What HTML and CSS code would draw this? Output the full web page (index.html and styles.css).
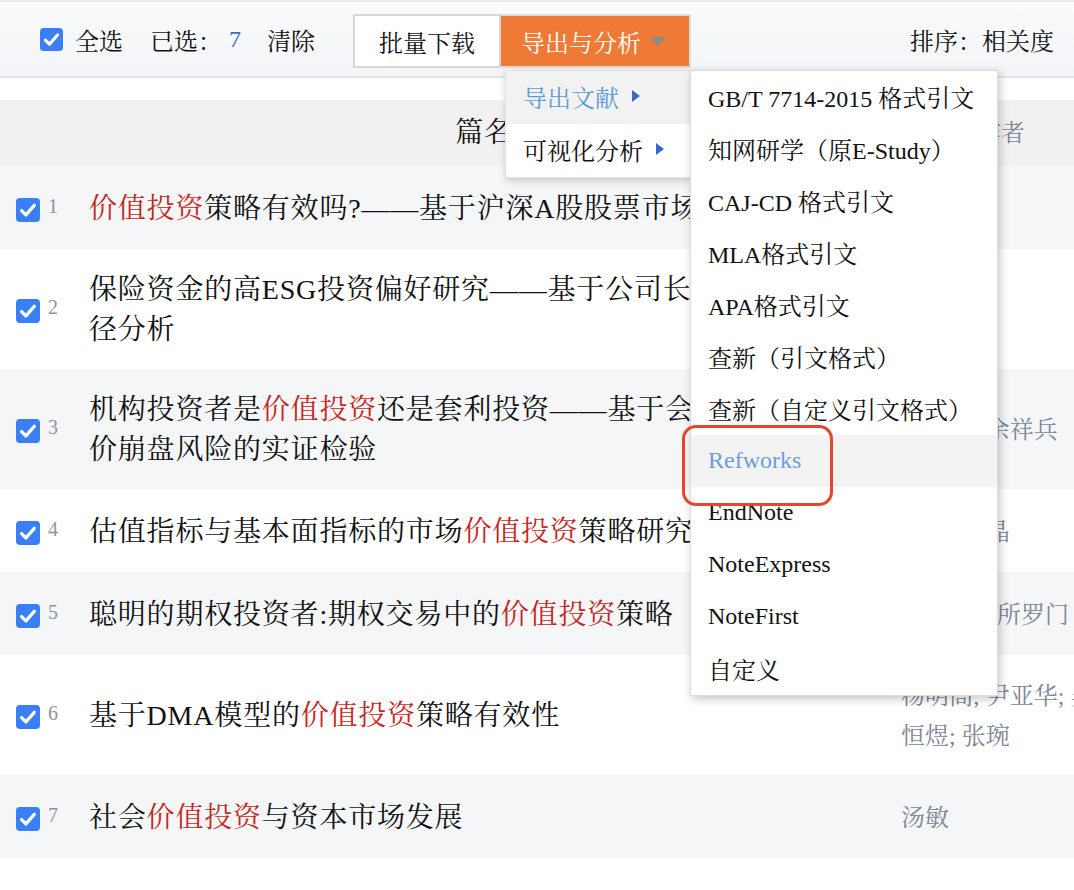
FILE: index.html
```html
<!DOCTYPE html>
<html lang="zh-CN">
<head>
<meta charset="utf-8">
<title>导出与分析</title>
<link rel="stylesheet" href="styles.css">
</head>
<body>
<div class="toolbar">
  <label class="select-all">
    <svg class="cb cb-top" viewBox="0 0 24 24"><rect width="24" height="24" rx="4" fill="#3a7ff6"/><path d="M5.6 12.6l4.3 4.3 8.4-9.6" fill="none" stroke="#fff" stroke-width="3.3" stroke-linecap="round" stroke-linejoin="round"/></svg>
    <span>全选</span>
  </label>
  <span class="selected">已选：</span><span class="count">7</span>
  <span class="clear">清除</span>
  <button class="btn btn-plain">批量下载</button>
  <div class="export">
    <button class="btn btn-orange">导出与分析<svg class="caret" viewBox="0 0 16 9"><path d="M0 0h16L8 9z" fill="#8a8a8a"/></svg></button>
    <div class="menu">
      <div class="menu-item active">导出文献<svg class="arrow" viewBox="0 0 8 12"><path d="M0 0L8 6 0 12z" fill="#3568cc"/></svg></div>
      <div class="menu-item">可视化分析<svg class="arrow" viewBox="0 0 8 12"><path d="M0 0L8 6 0 12z" fill="#3568cc"/></svg></div>
      <div class="submenu">
        <div class="sub-item">GB/T 7714-2015 格式引文</div>
        <div class="sub-item">知网研学（原E-Study）</div>
        <div class="sub-item">CAJ-CD 格式引文</div>
        <div class="sub-item">MLA格式引文</div>
        <div class="sub-item">APA格式引文</div>
        <div class="sub-item">查新（引文格式）</div>
        <div class="sub-item">查新（自定义引文格式）</div>
        <div class="sub-item hover">Refworks</div>
        <div class="sub-item">EndNote</div>
        <div class="sub-item">NoteExpress</div>
        <div class="sub-item">NoteFirst</div>
        <div class="sub-item">自定义</div>
        <div class="mark"></div>
      </div>
    </div>
  </div>
  <div class="sort">排序：相关度</div>
</div>

<div class="table">
  <div class="row head">
    <div class="c-check"></div>
    <div class="c-title">篇名</div>
    <div class="c-author">作者</div>
  </div>
  <div class="row alt">
    <div class="c-check"><svg class="cb" viewBox="0 0 24 24"><rect width="24" height="24" rx="4" fill="#3a7ff6"/><path d="M5.6 12.6l4.3 4.3 8.4-9.6" fill="none" stroke="#fff" stroke-width="3.3" stroke-linecap="round" stroke-linejoin="round"/></svg><span class="num">1</span></div>
    <div class="c-title"><em>价值投资</em>策略有效吗?——基于沪深A股股票市场的检验</div>
    <div class="c-author">李心丹</div>
  </div>
  <div class="row">
    <div class="c-check"><svg class="cb" viewBox="0 0 24 24"><rect width="24" height="24" rx="4" fill="#3a7ff6"/><path d="M5.6 12.6l4.3 4.3 8.4-9.6" fill="none" stroke="#fff" stroke-width="3.3" stroke-linecap="round" stroke-linejoin="round"/></svg><span class="num">2</span></div>
    <div class="c-title">保险资金的高ESG投资偏好研究——基于公司长期投资的路径分析</div>
    <div class="c-author">王静</div>
  </div>
  <div class="row alt">
    <div class="c-check"><svg class="cb" viewBox="0 0 24 24"><rect width="24" height="24" rx="4" fill="#3a7ff6"/><path d="M5.6 12.6l4.3 4.3 8.4-9.6" fill="none" stroke="#fff" stroke-width="3.3" stroke-linecap="round" stroke-linejoin="round"/></svg><span class="num">3</span></div>
    <div class="c-title">机构投资者是<em>价值投资</em>还是套利投资——基于会计信息与股价崩盘风险的实证检验</div>
    <div class="c-author">张瑞君; 余祥兵</div>
  </div>
  <div class="row">
    <div class="c-check"><svg class="cb" viewBox="0 0 24 24"><rect width="24" height="24" rx="4" fill="#3a7ff6"/><path d="M5.6 12.6l4.3 4.3 8.4-9.6" fill="none" stroke="#fff" stroke-width="3.3" stroke-linecap="round" stroke-linejoin="round"/></svg><span class="num">4</span></div>
    <div class="c-title">估值指标与基本面指标的市场<em>价值投资</em>策略研究</div>
    <div class="c-author">王立; 刘晶</div>
  </div>
  <div class="row alt">
    <div class="c-check"><svg class="cb" viewBox="0 0 24 24"><rect width="24" height="24" rx="4" fill="#3a7ff6"/><path d="M5.6 12.6l4.3 4.3 8.4-9.6" fill="none" stroke="#fff" stroke-width="3.3" stroke-linecap="round" stroke-linejoin="round"/></svg><span class="num">5</span></div>
    <div class="c-title">聪明的期权投资者:期权交易中的<em>价值投资</em>策略</div>
    <div class="c-author">[美]马克·所罗门</div>
  </div>
  <div class="row">
    <div class="c-check"><svg class="cb" viewBox="0 0 24 24"><rect width="24" height="24" rx="4" fill="#3a7ff6"/><path d="M5.6 12.6l4.3 4.3 8.4-9.6" fill="none" stroke="#fff" stroke-width="3.3" stroke-linecap="round" stroke-linejoin="round"/></svg><span class="num">6</span></div>
    <div class="c-title">基于DMA模型的<em>价值投资</em>策略有效性</div>
    <div class="c-author">杨明高; 尹亚华; 吴恒煜; 张琬</div>
  </div>
  <div class="row alt">
    <div class="c-check"><svg class="cb" viewBox="0 0 24 24"><rect width="24" height="24" rx="4" fill="#3a7ff6"/><path d="M5.6 12.6l4.3 4.3 8.4-9.6" fill="none" stroke="#fff" stroke-width="3.3" stroke-linecap="round" stroke-linejoin="round"/></svg><span class="num">7</span></div>
    <div class="c-title">社会<em>价值投资</em>与资本市场发展</div>
    <div class="c-author">汤敏</div>
  </div>
</div>
</body>
</html>
```

FILE: styles.css
```css
* { box-sizing: border-box; }

html, body {
  margin: 0;
  padding: 0;
}

body {
  width: 1074px;
  height: 890px;
  overflow: hidden;
  background: #fff;
  color: #111;
  font-family: "Liberation Serif", "Noto Serif CJK SC", "Noto Sans CJK SC", serif;
}

/* ---------- toolbar ---------- */
.toolbar {
  display: flex;
  align-items: center;
  height: 78px;
  padding: 0 20px 0 40px;
  border-top: 2px solid #e9eaec;
  border-bottom: 2px solid #dfe3ea;
  background: linear-gradient(#fafbfc, #f2f4f7);
  font-size: 24px;
  position: relative;
  z-index: 5;
}

.select-all {
  display: flex;
  align-items: center;
  gap: 12px;
}

.cb {
  width: 24px;
  height: 24px;
  display: block;
  flex: none;
}

.cb-top {
  width: 23px;
  height: 23px;
}

.selected { margin-left: 27px; }

.count {
  margin-left: 7px;
  color: #3a6ec6;
}

.clear { margin-left: 26px; }

.btn {
  font: inherit;
  height: 54px;
  margin-top: 4px;
  border: 2px solid #d6d7d9;
  display: flex;
  align-items: center;
  cursor: pointer;
}

.btn-plain {
  margin-left: 38px;
  width: 148px;
  justify-content: center;
  background: #fff;
  color: #111;
}

.export {
  position: relative;
  margin-top: 4px;
}

.btn-orange {
  margin-top: 0;
  width: 190px;
  padding: 0 0 0 20px;
  background: #ee7a36;
  border-color: #dcdcdc;
  border-left-width: 0;
  color: #fff;
}

.caret {
  width: 16px;
  height: 9px;
  margin-left: 9px;
}

.sort { margin-left: auto; }

/* ---------- dropdown ---------- */
.menu {
  position: absolute;
  top: calc(100% + 2px);
  left: 4px;
  width: 187px;
  background: #fff;
  border: 1px solid #e2e2e2;
  box-shadow: 1px 3px 8px rgba(0, 0, 0, 0.18);
}

.menu-item {
  height: 53px;
  display: flex;
  align-items: center;
  padding-left: 17px;
  padding-bottom: 3px;
  font-size: 24px;
  color: #111;
}

.menu-item.active {
  background: #f2f2f2;
  color: #5b9ad8;
}

.arrow {
  width: 8px;
  height: 12px;
  margin-left: 13px;
}

.submenu {
  position: absolute;
  top: -1px;
  left: calc(100% - 1px);
  width: 308px;
  background: #fff;
  border: 1px solid #dcdcdc;
  box-shadow: 2px 3px 9px rgba(0, 0, 0, 0.22);
}

.sub-item {
  height: 52px;
  display: flex;
  align-items: center;
  padding-left: 17px;
  padding-bottom: 2px;
  font-size: 24px;
  color: #111;
  white-space: nowrap;
}

.sub-item.hover {
  background: #f3f3f3;
  color: #6a9fdb;
}

.mark {
  position: absolute;
  left: -9px;
  top: 354px;
  width: 151px;
  height: 81px;
  border: 3px solid #e8452d;
  border-radius: 14px;
}

/* ---------- table ---------- */
.table {
  margin-top: 22px;
}

.row {
  display: grid;
  grid-template-columns: 89px 790px 222px;
  align-items: center;
  min-height: 83px;
  padding: 21px 0 19px;
  background: #fff;
}

.row.alt { background: #f5f6f8; }

.row.head {
  height: 66px;
  min-height: 66px;
  padding: 0;
  background: #f1f1f1;
  color: #8c95a3;
  font-size: 26px;
}

.head .c-title,
.head .c-author {
  text-align: center;
  padding-right: 0;
}

.c-check {
  display: flex;
  align-items: center;
  gap: 8px;
  padding-left: 16px;
  padding-top: 2px;
}

.num {
  font-size: 20px;
  line-height: 24px;
  color: #8b94a3;
  margin-bottom: 8px;
}

.c-title {
  padding-right: 30px;
  font-size: 28px;
  letter-spacing: 0.8px;
  line-height: 40px;
  color: #111;
}

.c-title em {
  font-style: normal;
  color: #c5281e;
}

.c-author {
  padding-left: 22px;
  font-size: 24px;
  line-height: 40px;
  color: #7c8696;
}
```
